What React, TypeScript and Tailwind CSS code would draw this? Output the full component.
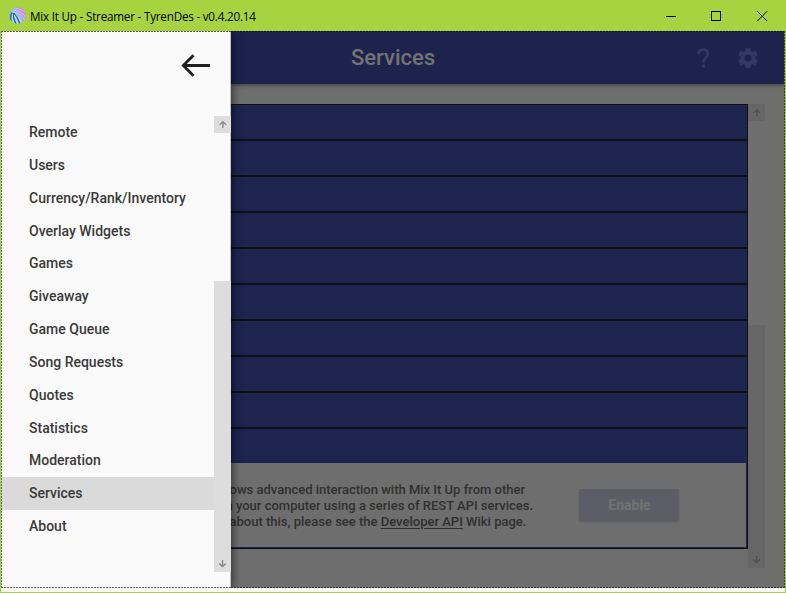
import React from "react";

const navItems = [
  "Remote",
  "Users",
  "Currency/Rank/Inventory",
  "Overlay Widgets",
  "Games",
  "Giveaway",
  "Game Queue",
  "Song Requests",
  "Quotes",
  "Statistics",
  "Moderation",
  "Services",
  "About",
];

function ArrowGlyph({ down = false, className = "" }: { down?: boolean; className?: string }) {
  return (
    <svg width="17" height="17" viewBox="0 0 17 17" className={className} fill="none" stroke="currentColor" strokeWidth="1.3">
      {down ? <path d="M8.5 5v6.3M5.2 8.6l3.3 3 3.3-3" /> : <path d="M8.9 12V5.5M5.6 8.9l3.3-3.3 3.3 3.3" />}
    </svg>
  );
}

function Logo() {
  return (
    <svg width="17" height="17" viewBox="0 0 17 17">
      <defs>
        <linearGradient id="orb" x1="0.1" y1="0.8" x2="0.85" y2="0.2">
          <stop offset="0" stopColor="#6fc4ea" />
          <stop offset="0.55" stopColor="#9fb4ee" />
          <stop offset="1" stopColor="#e07fe0" />
        </linearGradient>
        <clipPath id="disc">
          <circle cx="8.5" cy="8.5" r="8.2" />
        </clipPath>
      </defs>
      <g clipPath="url(#disc)">
        <rect width="17" height="17" fill="url(#orb)" />
        <g fill="none" stroke="#e4f4fa" strokeWidth="0.8">
          <path d="M3 4.5Q10 5 16 13M4 3Q12 4 17 10M6 1Q13 2 17 6" opacity=".55" />
          <path d="M5 5.5Q10 9 13 17M4 6Q7 10 8.6 17M3.5 6Q2.5 10 5 16" />
        </g>
        <path d="M3 5.5Q1 9 2 14M4.2 6Q4 12 7 17M5 6Q8.5 10 11 17" fill="none" stroke="#1c5792" strokeWidth="1.1" />
      </g>
    </svg>
  );
}

function TitleBar() {
  return (
    <header className="flex h-[31px] shrink-0 items-center bg-[#a6d33f] pl-[9px] text-black">
      <Logo />
      <span className="ml-1 whitespace-nowrap font-['Open_Sans',sans-serif] text-[11.7px] leading-4 tracking-[-0.22px]">
        Mix It Up - Streamer - TyrenDes - v0.4.20.14
      </span>
      <div className="ml-auto flex">
        <svg width="46" height="30" viewBox="0 0 46 30" stroke="#000" fill="none" shapeRendering="crispEdges">
          <path d="M18 15.5h10" />
        </svg>
        <svg width="46" height="30" viewBox="0 0 46 30" stroke="#000" fill="none" shapeRendering="crispEdges">
          <path d="M17.5 10.5h9v9h-9z" />
        </svg>
        <svg width="46" height="30" viewBox="0 0 46 30" stroke="#000" fill="none">
          <path d="M17.3 10.3l9.8 9.8M27.1 10.3l-9.8 9.8" />
        </svg>
      </div>
    </header>
  );
}

function Drawer() {
  return (
    <aside className="relative z-10 flex w-[230px] shrink-0 flex-col border-r border-[#c2c2c2] bg-[#fafafa] shadow-[2px_0_8px_rgba(0,0,0,0.5)]">
      <div className="flex h-[85px] shrink-0 justify-end pr-5 pt-[22px]">
        <svg width="30" height="25" viewBox="0 0 30 25" fill="none" stroke="#1f1f1f" strokeWidth="2.8">
          <path d="M30 12.5H3.5M13.5 2.3L3.3 12.5L13.5 22.7" />
        </svg>
      </div>
      <div className="flex h-[456px]">
        <nav className="flex-1 font-['Roboto',sans-serif] text-[14px] font-medium text-[#3a3a3a]">
          {navItems.map((item) => (
            <div
              key={item}
              className={`flex h-[32.83px] items-center whitespace-nowrap pl-7 pt-[0.5px] ${item === "Services" ? "bg-[#dadada]" : ""}`}
            >
              {item}
            </div>
          ))}
        </nav>
        <div className="flex w-4 flex-col justify-between text-[#858585]">
          <div className="h-[17px] w-[17px] bg-[#dddddd]">
            <ArrowGlyph />
          </div>
          <div className="flex h-[291px] w-[17px] flex-col justify-end bg-[#dddddd]">
            <ArrowGlyph down />
          </div>
        </div>
      </div>
    </aside>
  );
}

function ServiceList() {
  return (
    <div className="flex h-[445px] w-[517px] flex-col border-y border-r border-[#101010] bg-[#1d254f]">
      {Array.from({ length: 9 }, (_, i) => (
        <div key={i} className="h-9 shrink-0 border-b-2 border-[#101010]" />
      ))}
      <div className="h-[34px] shrink-0" />
      <div className="mr-px flex h-[84px] items-start overflow-hidden bg-[#6e6e6e]">
        <div className="mt-[19px] w-[348px] whitespace-nowrap font-['Roboto',sans-serif] text-[13px] font-medium leading-4 text-[#303030]">
          <div className="-ml-[1.5px]">ows advanced interaction with Mix It Up from other</div>
          <div className="-ml-[5.5px]">n your computer using a series of REST API services.</div>
          <div className="-ml-[1.5px]">
            about this, please see the <span className="underline underline-offset-2">Developer API</span> Wiki page.
          </div>
        </div>
        <div className="mt-[26px] flex h-8 w-[100px] items-center justify-center rounded-[2px] bg-[#5d5d67] pl-px font-['Roboto',sans-serif] text-[14px] font-bold text-[#727272] shadow-[0_1px_2px_rgba(0,0,0,0.15)]">
          Enable
        </div>
      </div>
    </div>
  );
}

function Content() {
  return (
    <main className="flex min-w-0 flex-1 flex-col bg-[#6e6e6e]">
      <div className="flex h-[53px] shrink-0 items-center bg-[#1c244e] pl-[120px] shadow-[0_1px_4px_rgba(0,0,0,0.45)]">
        <h1 className="font-['Roboto',sans-serif] text-[22px] font-medium leading-6 text-[#737373]">Services</h1>
        <div className="ml-auto flex items-center pr-[25px] text-[#323a63]">
          <svg width="24" height="24" viewBox="0 0 24 24" fill="none" stroke="currentColor" strokeWidth="2.8" className="mr-[21px]">
            <path d="M7.4 8.2C7.4 5.2 9 3.6 12 3.6S16.8 5.2 16.8 7.8C16.8 11.4 12.5 11.6 12.5 16.2" />
            <path d="M11 18.6h3v3h-3z" fill="currentColor" stroke="none" />
          </svg>
          <svg width="24" height="24" viewBox="0 0 24 24" fill="currentColor">
            <path d="M12 15.5A3.5 3.5 0 0 1 8.5 12 3.5 3.5 0 0 1 12 8.5a3.5 3.5 0 0 1 3.5 3.5 3.5 3.5 0 0 1-3.5 3.5m7.43-2.53c.04-.32.07-.64.07-.97s-.03-.66-.07-1l2.11-1.63c.19-.15.24-.42.12-.64l-2-3.46c-.12-.22-.39-.31-.61-.22l-2.49 1c-.52-.39-1.06-.73-1.69-.98l-.37-2.65A.506.506 0 0 0 14 2h-4c-.25 0-.46.18-.5.42l-.37 2.65c-.63.25-1.17.59-1.69.98l-2.49-1c-.22-.09-.49 0-.61.22l-2 3.46c-.13.22-.07.49.12.64L4.57 11c-.04.34-.07.67-.07 1s.03.65.07.97l-2.11 1.66c-.19.15-.25.42-.12.64l2 3.46c.12.22.39.3.61.22l2.49-1.01c.52.4 1.06.74 1.69.99l.37 2.65c.04.24.25.42.5.42h4c.25 0 .46-.18.5-.42l.37-2.65c.63-.26 1.17-.59 1.69-.99l2.49 1.01c.22.08.49 0 .61-.22l2-3.46c.12-.22.07-.49-.12-.64z" />
          </svg>
        </div>
      </div>
      <div className="mt-5 flex">
        <ServiceList />
        <div className="flex h-[464px] w-[17px] flex-col justify-between text-[#515151]">
          <div className="h-[17px] bg-[#666666]">
            <ArrowGlyph />
          </div>
          <div className="flex h-[243px] flex-col justify-end bg-[#666666]">
            <ArrowGlyph down />
          </div>
        </div>
      </div>
    </main>
  );
}

export default function App() {
  return (
    <div className="flex h-[593px] w-[786px] flex-col overflow-hidden bg-[#a6d33f]">
      <TitleBar />
      <div className="mx-px h-[561px] bg-[#fafafa]">
        <div className="relative flex h-[557px] overflow-hidden">
          <Drawer />
          <Content />
          {/* Focus rectangle drawn over the window's client area */}
          <div className="pointer-events-none absolute inset-x-0 top-0 z-20 h-px bg-[repeating-linear-gradient(90deg,#555_0_2px,transparent_2px_3px)]" />
          <div className="pointer-events-none absolute inset-x-0 bottom-0 z-20 h-px bg-[repeating-linear-gradient(90deg,#666_0_2px,#ddd_2px_3px)]" />
          <div className="pointer-events-none absolute bottom-0 left-[230px] right-0 z-20 h-px bg-[repeating-linear-gradient(90deg,#333_0_2px,#888_2px_3px)]" />
          <div className="pointer-events-none absolute left-[230px] right-0 top-0 z-20 h-px bg-[repeating-linear-gradient(90deg,#0c0f20_0_2px,#2c3458_2px_3px)]" />
          <div className="pointer-events-none absolute inset-y-0 left-0 z-20 w-px bg-[repeating-linear-gradient(180deg,#666_0_2px,transparent_2px_3px)]" />
          <div className="pointer-events-none absolute inset-y-0 right-0 z-20 w-px bg-[repeating-linear-gradient(180deg,#333_0_2px,#888_2px_3px)]" />
        </div>
      </div>
    </div>
  );
}
